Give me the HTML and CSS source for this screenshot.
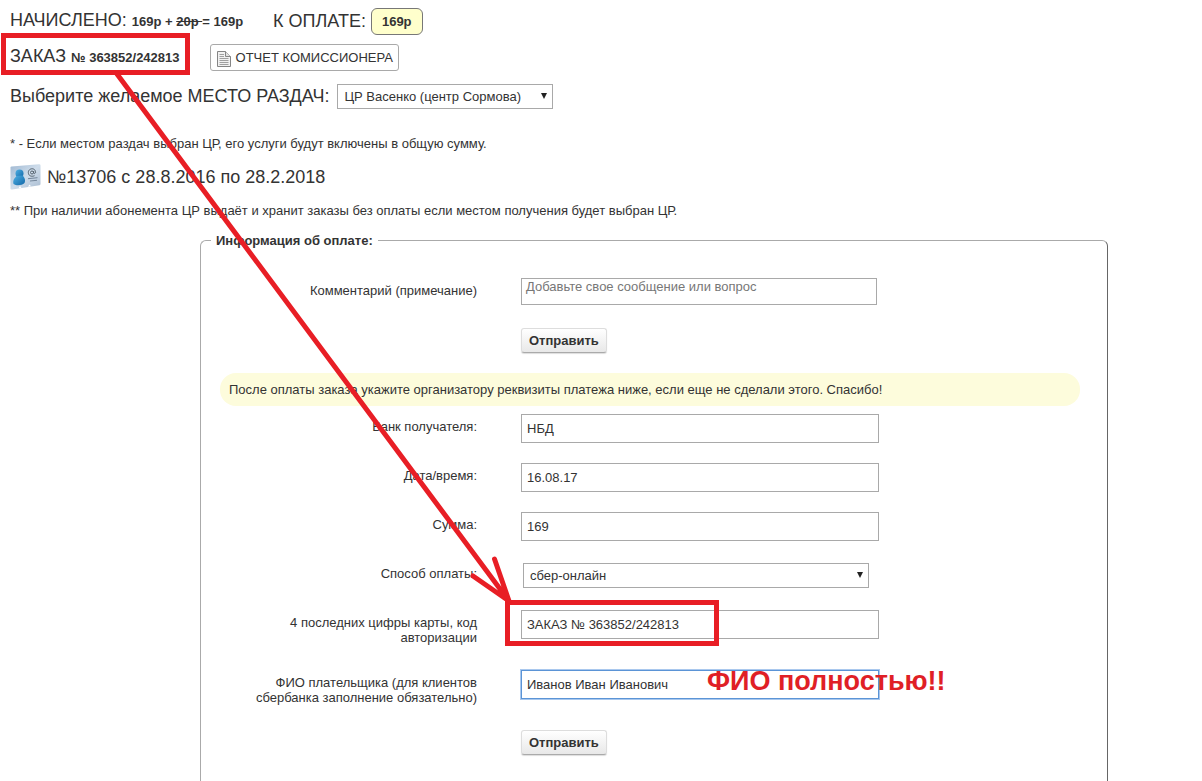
FILE: index.html
```
<!DOCTYPE html>
<html lang="ru">
<head>
<meta charset="utf-8">
<title>Оплата заказа</title>
<link rel="stylesheet" href="styles.css">
</head>
<body>
<main class="page">
  <header class="summary">
    <div class="line">
      <span class="caption">НАЧИСЛЕНО: <b class="amount">169р + <s>20р </s>= 169р</b></span>
      <span class="total"><span class="caption">К ОПЛАТЕ:</span><b class="badge">169р</b></span>
    </div>
    <div class="line order">
      <span class="caption">ЗАКАЗ <b class="amount">№ 363852/242813</b></span>
      <button type="button" class="report">
        <svg width="16" height="18" viewBox="0 0 16 18" aria-hidden="true">
          <path d="M1.500 2.500H9.500L14.500 7.500V17.500H1.500Z" fill="#f1f1f1" stroke="#858585"/>
          <path d="M9.500 2.500V7.500H14.500" fill="#e2e2e2" stroke="#858585"/>
          <path d="M3.500 5.500H8M3.500 7.500H8M3.500 9.500H12.500M3.500 11.500H12.500M3.500 13.500H12.500M3.500 15.500H12.500" stroke="#a0a0a0"/>
        </svg>
        ОТЧЕТ КОМИССИОНЕРА
      </button>
    </div>
    <div class="line place">
      <label class="caption" for="place">Выберите желаемое МЕСТО РАЗДАЧ:</label>
      <span class="picker place-picker"><select id="place"><option>ЦР Васенко (центр Сормова)</option></select></span>
    </div>
  </header>

  <p class="remark">* - Если местом раздач выбран ЦР, его услуги будут включены в общую сумму.</p>
  <p class="pass">
    <svg width="31" height="26" viewBox="0 0 31 26" aria-hidden="true">
      <defs>
        <linearGradient id="card" x1="0" y1="0" x2="1" y2="1"><stop offset="0" stop-color="#9fb8d2"/><stop offset=".5" stop-color="#cfddeb"/><stop offset="1" stop-color="#a8bbd0"/></linearGradient>
        <linearGradient id="person" x1="0" y1="0" x2="1" y2="1"><stop offset="0" stop-color="#4fb0e4"/><stop offset="1" stop-color="#1268a8"/></linearGradient>
      </defs>
      <path d="M.5 3.500Q.5 2.500 1.500 2.400L29 .3Q30.500.2 30.500 1.500V20Q30.500 21 29.500 21.200L2 25.400Q.5 25.600.5 24.200Z" fill="url(#card)"/>
      <path d="M8.500 24.200l1.500-2.200 1.500 1.800zM18 22.700l1.500-2.200 1.500 1.800z" fill="#fff"/>
      <circle cx="9.500" cy="9.500" r="4" fill="url(#person)"/>
      <path d="M3.500 20C2.500 15.500 5 14 6.500 12L12.500 11.500C14 13 16 15.500 14.500 19C12 21.500 6.500 22 3.500 20Z" fill="url(#person)"/>
      <g fill="none" stroke="#53606c"><circle cx="22" cy="8.500" r="1.500"/><path d="M23.700 7V9Q24.500 10.500 25.500 8.700C26 3.500 18.500 3.500 18.300 8.500C18.500 12 21.500 13 24.500 11.700"/><path d="M18 14.700L27.500 13.700M20 17L27 16.300" stroke="#74869a"/></g>
    </svg>
    №13706 с 28.8.2016 по 28.2.2018
  </p>
  <p class="remark">** При наличии абонемента ЦР выдаёт и хранит заказы без оплаты если местом получения будет выбран ЦР.</p>

  <form>
    <fieldset class="payment">
      <legend>Информация об оплате:</legend>
      <div class="row">
        <label for="comment">Комментарий (примечание)</label>
        <textarea id="comment" class="comment" rows="1" placeholder="Добавьте свое сообщение или вопрос"></textarea>
      </div>
      <div class="row"><button type="button" class="send">Отправить</button></div>
      <p class="notice">После оплаты заказа укажите организатору реквизиты платежа ниже, если еще не сделали этого. Спасибо!</p>
      <div class="row">
        <label for="bank">Банк получателя:</label>
        <input id="bank" type="text" value="НБД">
      </div>
      <div class="row">
        <label for="date">Дата/время:</label>
        <input id="date" type="text" value="16.08.17">
      </div>
      <div class="row">
        <label for="sum">Сумма:</label>
        <input id="sum" type="text" value="169">
      </div>
      <div class="row">
        <label for="method">Способ оплаты:</label>
        <span class="picker method-picker"><select id="method"><option>сбер-онлайн</option></select></span>
      </div>
      <div class="row">
        <label for="code">4 последних цифры карты, код авторизации</label>
        <input id="code" type="text" value="ЗАКАЗ № 363852/242813">
      </div>
      <div class="row">
        <label for="payer">ФИО плательщика (для клиентов сбербанка заполнение обязательно)</label>
        <input id="payer" class="active" type="text" value="Иванов Иван Иванович">
      </div>
      <div class="row"><button type="button" class="send">Отправить</button></div>
    </fieldset>
  </form>

  <svg class="marks" width="740" height="660" viewBox="0 0 740 660" aria-hidden="true">
    <g fill="none" stroke="#e81e25" stroke-width="5">
      <rect x="3.500" y="35.500" width="184" height="37"/>
      <rect x="507.500" y="602.500" width="209" height="41"/>
      <path d="M117 74L509 601M494.500 559L509 601L473 576" stroke-linecap="round" stroke-linejoin="round"/>
    </g>
  </svg>
  <strong class="hint">ФИО полностью!!</strong>
</main>
</body>
</html>
```
FILE: styles.css
```
* {
  box-sizing: border-box;
}

body {
  margin: 0;
  background: #fff;
  color: #333;
  font: 13px/15px "Liberation Sans", Arial, sans-serif;
}

button,
input,
select,
textarea {
  margin: 0;
  border: 1px solid #a9a9a9;
  background: #fff;
  color: #333;
  font: inherit;
}

.page {
  position: relative;
  padding-top: 8px;
}

.summary,
.remark,
.pass {
  padding-left: 10px;
}

.line {
  display: flex;
  align-items: center;
}

.caption {
  padding-bottom: 2px;
  font-size: 18px;
  line-height: 22px;
}

.amount {
  font-size: 13px;
}

.total {
  display: flex;
  align-items: center;
  gap: 5px;
  margin-left: 30px;
}

.badge {
  padding: 5px 10px;
  border: 1px solid #777;
  border-radius: 6px;
  background: #ffc;
}

.order {
  gap: 30px;
  margin-top: 9px;
}

.report {
  display: flex;
  align-items: center;
  gap: 4px;
  height: 27px;
  padding: 0 5px;
  border-radius: 3px;
}

.place {
  gap: 8px;
  margin-top: 13px;
}

.picker {
  position: relative;
  display: block;
}

.picker::after {
  content: "";
  position: absolute;
  top: 9px;
  right: 6px;
  border: solid transparent;
  border-width: 6px 3px 0;
  border-top-color: #222;
}

.picker select {
  display: block;
  width: 100%;
  height: 25px;
  padding: 0 6px;
  appearance: none;
  border-radius: 0;
}

.place-picker {
  width: 216px;
}

.remark {
  margin: 27px 0 13px;
}

.pass {
  display: flex;
  align-items: center;
  gap: 6px;
  margin: 0;
  font-size: 18px;
}

.pass + .remark {
  margin: 13px 0 15px;
}

.payment {
  min-width: 0;
  margin: 0 94px 0 200px;
  padding: 30px 27px 6px 19px;
  border: 1px solid #aaa;
  border-right-color: #666;
  border-bottom: 0;
  border-radius: 6px 6px 0 0;
}

.payment legend {
  margin-left: -9px;
  padding: 0 5px;
  font-weight: bold;
}

.row {
  display: grid;
  grid-template-columns: 257px minmax(0, 358px);
  column-gap: 44px;
  align-items: start;
  margin-bottom: 20px;
}

.row label {
  padding: 5px 0;
  text-align: right;
}

.row input {
  width: 100%;
  height: 29px;
  padding: 0 5px;
}

.row .active {
  border-color: #5b94d6;
  outline: 1px solid #a9c8ee;
  outline-offset: 0;
}

.comment {
  height: 27px;
  margin: 0 2px 3px 0;
  padding: 0 4px;
  resize: none;
  overflow: hidden;
}

.comment::placeholder {
  color: #777;
}

.send {
  grid-column: 2;
  justify-self: start;
  height: 25px;
  padding: 0 7px;
  border-color: #ddd #ddd #aaa;
  border-radius: 3px;
  background: linear-gradient(#fff, #e8e8e8);
  box-shadow: 0 1px 1px #ddd;
  font-weight: bold;
}

.notice {
  margin: 0 0 8px;
  padding: 9px;
  border-radius: 16px;
  background: #fdfcdc;
}

.method-picker {
  margin: 2px 10px 2px 2px;
}

.marks {
  position: absolute;
  top: 0;
  left: 0;
  pointer-events: none;
}

.hint {
  position: absolute;
  top: 666px;
  left: 707px;
  color: #e01f26;
  font-size: 27px;
  line-height: 30px;
  white-space: nowrap;
}
```
